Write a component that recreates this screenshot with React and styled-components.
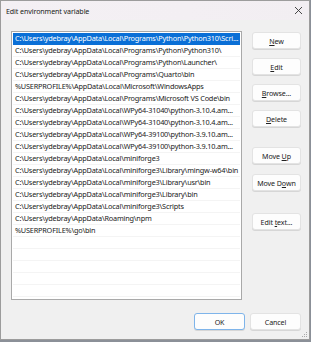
import React from "react";
import styled, { createGlobalStyle } from "styled-components";

const Global = createGlobalStyle`
  html, body { margin: 0; padding: 0; background: #8b9098; }
  body { width: 311px; height: 342px; overflow: hidden; }
  * { box-sizing: border-box; }
`;

const Window = styled.div`
  width: 310px;
  height: 340px;
  border: 1px solid #9c9c9c;
  background: #f0f0f0;
  display: flex;
  flex-direction: column;
  font-family: "Noto Sans", "Open Sans", sans-serif;
  color: #000;
  position: relative;
`;

const TitleBar = styled.div`
  height: 19px;
  display: flex;
  align-items: center;
  justify-content: space-between;
  padding: 0 6px 0 5px;
  background: linear-gradient(90deg, #f4f0f4 0%, #f3eff3 60%, #f2eef2 100%);
`;

const Title = styled.span`
  font-size: 7.1px;
  color: #1a1a1a;
  letter-spacing: -0.1px;
`;

const Body = styled.div`
  flex: 1;
  display: flex;
  flex-direction: column;
  padding: 11px 8px 9px 10px;
`;

const Main = styled.div`
  display: flex;
  gap: 10px;
`;

const List = styled.div`
  width: 231px;
  height: 269px;
  border: 1px solid #a9a9a9;
  background: #fff;
  padding: 0 1px;
  overflow: hidden;
`;

const Row = styled.div`
  height: 12px;
  line-height: 11px;
  font-size: 7.3px;
  padding-left: 2px;
  white-space: nowrap;
  overflow: hidden;
  letter-spacing: -0.19px;
  color: ${(p) => (p.$selected ? "#fff" : "#1a1a1a")};
  background: ${(p) => (p.$selected ? "#0a6fd6" : "#fff")};
  border-bottom: 1px solid ${(p) => (p.$selected ? "#0a6fd6" : "#f4f4f4")};
  &:first-child {
    margin-top: 1px;
  }
`;

const Side = styled.div`
  display: flex;
  flex-direction: column;
  width: 49px;
`;

const Button = styled.button`
  width: ${(p) => p.$w || 49}px;
  height: 17px;
  margin-top: ${(p) => p.$top || 0}px;
  padding: 0;
  background: #fdfdfd;
  border: 1px solid ${(p) => (p.$default ? "#7eb4ea" : "#e3e3e3")};
  border-radius: 3px;
  font-family: "Noto Sans", "Open Sans", sans-serif;
  font-size: 7.1px;
  letter-spacing: -0.1px;
  color: #222;
  display: flex;
  align-items: center;
  justify-content: center;
  white-space: pre;
  box-shadow: 0 1px 0 #d6d6d6;
  u {
    text-decoration: underline;
    text-underline-offset: 1px;
  }
`;

const Footer = styled.div`
  margin-top: auto;
  display: flex;
  justify-content: flex-end;
  gap: 5px;
`;

const Grip = styled.svg`
  position: absolute;
  right: 1px;
  bottom: 1px;
`;

const rows = [
  "C:\\Users\\ydebray\\AppData\\Local\\Programs\\Python\\Python310\\Scri...",
  "C:\\Users\\ydebray\\AppData\\Local\\Programs\\Python\\Python310\\",
  "C:\\Users\\ydebray\\AppData\\Local\\Programs\\Python\\Launcher\\",
  "C:\\Users\\ydebray\\AppData\\Local\\Programs\\Quarto\\bin",
  "%USERPROFILE%\\AppData\\Local\\Microsoft\\WindowsApps",
  "C:\\Users\\ydebray\\AppData\\Local\\Programs\\Microsoft VS Code\\bin",
  "C:\\Users\\ydebray\\AppData\\Local\\WPy64-31040\\python-3.10.4.am...",
  "C:\\Users\\ydebray\\AppData\\Local\\WPy64-31040\\python-3.10.4.am...",
  "C:\\Users\\ydebray\\AppData\\Local\\WPy64-39100\\python-3.9.10.am...",
  "C:\\Users\\ydebray\\AppData\\Local\\WPy64-39100\\python-3.9.10.am...",
  "C:\\Users\\ydebray\\AppData\\Local\\miniforge3",
  "C:\\Users\\ydebray\\AppData\\Local\\miniforge3\\Library\\mingw-w64\\bin",
  "C:\\Users\\ydebray\\AppData\\Local\\miniforge3\\Library\\usr\\bin",
  "C:\\Users\\ydebray\\AppData\\Local\\miniforge3\\Library\\bin",
  "C:\\Users\\ydebray\\AppData\\Local\\miniforge3\\Scripts",
  "C:\\Users\\ydebray\\AppData\\Roaming\\npm",
  "%USERPROFILE%\\go\\bin",
  "",
  "",
  "",
  "",
  "",
  "",
];

export default function App() {
  return (
    <>
      <Global />
      <Window>
        <TitleBar>
          <Title>Edit environment variable</Title>
          <svg width="9" height="9" viewBox="0 0 9 9">
            <path d="M1 1L8 8M8 1L1 8" stroke="#333" strokeWidth="0.9" />
          </svg>
        </TitleBar>
        <Body>
          <Main>
            <List>
              {rows.map((r, i) => (
                <Row key={i} $selected={i === 0}>
                  {r || "\u00a0"}
                </Row>
              ))}
            </List>
            <Side>
              <Button $top={1}><u>N</u>ew</Button>
              <Button $top={9}><u>E</u>dit</Button>
              <Button $top={9}><u>B</u>rowse...</Button>
              <Button $top={9}><u>D</u>elete</Button>
              <Button $top={20}>{"Move "}<u>U</u>p</Button>
              <Button $top={10}>{"Move D"}<u>o</u>wn</Button>
              <Button $top={22}>{"Edit "}<u>t</u>ext...</Button>
            </Side>
          </Main>
          <Footer>
            <Button $default $w={51}>OK</Button>
            <Button $w={51}>Cancel</Button>
          </Footer>
        </Body>
        <Grip width="6" height="6" viewBox="0 0 6 6">
          <rect x="4" y="0" width="1" height="1" fill="#aaa" />
          <rect x="2" y="2" width="1" height="1" fill="#aaa" />
          <rect x="4" y="2" width="1" height="1" fill="#aaa" />
          <rect x="0" y="4" width="1" height="1" fill="#aaa" />
          <rect x="2" y="4" width="1" height="1" fill="#aaa" />
          <rect x="4" y="4" width="1" height="1" fill="#aaa" />
        </Grip>
      </Window>
    </>
  );
}
